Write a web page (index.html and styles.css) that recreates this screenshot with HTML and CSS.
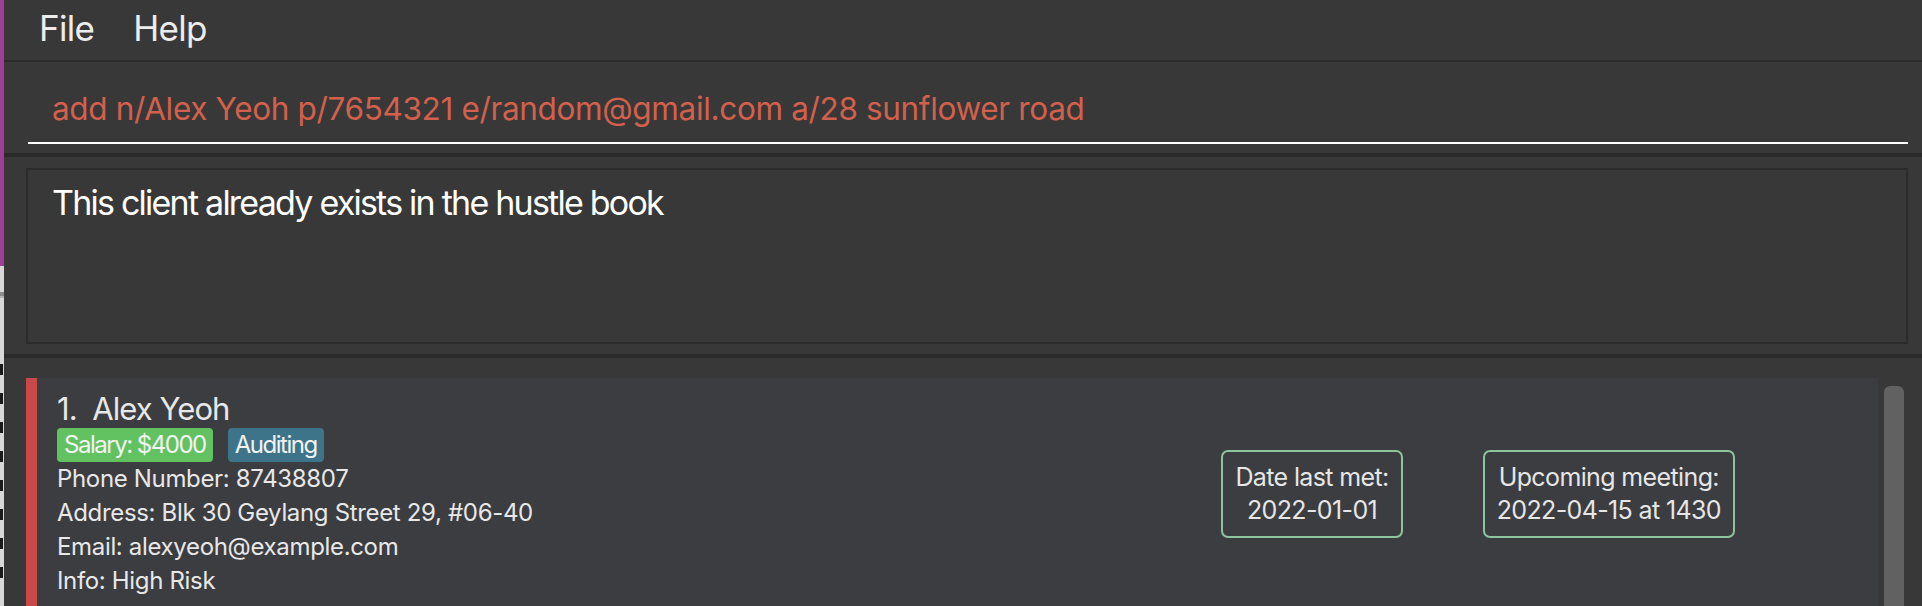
FILE: index.html
```html
<!DOCTYPE html>
<html lang="en">
<head>
<meta charset="utf-8">
<title>Hustle Book</title>
<link rel="stylesheet" href="styles.css">
</head>
<body>
<div class="screen">
  <div class="edge">
    <div class="edge-top"></div>
    <div class="edge-bottom">
      <div class="edge-band"></div>
      <div class="edge-marks">
        <span class="mark"></span><span class="mark"></span><span class="mark"></span>
        <span class="mark"></span><span class="mark"></span><span class="mark"></span>
        <span class="mark"></span><span class="mark"></span>
      </div>
    </div>
  </div>
  <div class="app">
    <nav class="menubar">
      <span class="menu-item">File</span>
      <span class="menu-item">Help</span>
    </nav>
    <section class="command">
      <div class="command-input">add n/Alex Yeoh p/7654321 e/random@gmail.com a/28 sunflower road</div>
    </section>
    <section class="result">
      <div class="result-box">This client already exists in the hustle book</div>
    </section>
    <section class="list">
      <div class="card">
        <div class="card-bar"></div>
        <div class="card-body">
          <div class="info">
            <div class="name">1.&nbsp; Alex Yeoh</div>
            <div class="tags">
              <span class="tag tag-salary">Salary: $4000</span>
              <span class="tag tag-field">Auditing</span>
            </div>
            <div class="line">Phone Number: 87438807</div>
            <div class="line">Address: Blk 30 Geylang Street 29, #06-40</div>
            <div class="line">Email: alexyeoh@example.com</div>
            <div class="line">Info: High Risk</div>
          </div>
          <div class="meetings">
            <div class="meet-box">Date last met:<br>2022-01-01</div>
            <div class="meet-box">Upcoming meeting:<br>2022-04-15 at 1430</div>
          </div>
        </div>
      </div>
      <div class="scrollbar"><div class="thumb"></div></div>
    </section>
  </div>
</div>
</body>
</html>
```

FILE: styles.css
```css
* { box-sizing: border-box; }

html, body {
  margin: 0;
  padding: 0;
}

body {
  width: 1922px;
  height: 606px;
  overflow: hidden;
  background: #383838;
  font-family: Inter, Roboto, "Liberation Sans", sans-serif;
}

.screen {
  display: flex;
  height: 606px;
}

/* sliver of the window behind */
.edge {
  width: 4px;
  display: flex;
  flex-direction: column;
  overflow: hidden;
}

.edge-top {
  height: 266px;
  background: #9d3f98;
}

.edge-bottom {
  flex: 1;
  background: #d8d8d8;
  padding-top: 26px;
}

.edge-band {
  height: 6px;
  background: #8a8a8a;
  margin-bottom: 8px;
  border-bottom: 2px solid #b5b5b5;
}

.edge-marks {
  display: flex;
  flex-direction: column;
  gap: 18px;
  padding-top: 58px;
}

.mark {
  display: block;
  width: 3px;
  height: 11px;
  background: #1a1a1a;
}

.app {
  flex: 1;
  display: flex;
  flex-direction: column;
  background: #383838;
}

/* menu */
.menubar {
  height: 62px;
  display: flex;
  gap: 39px;
  padding: 0 0 6px 35px;
  border-bottom: 2px solid #2b2b2b;
}

.menu-item {
  font-size: 35px;
  line-height: 56px;
  letter-spacing: -0.02em;
  color: #ececec;
}

/* command */
.command {
  padding: 27px 14px 9px 24px;
  border-bottom: 4px solid #2a2a2a;
}

.command-input {
  font-size: 31.5px;
  line-height: 40px;
  letter-spacing: -0.011em;
  color: #d3604c;
  padding: 0 0 13px 24px;
  border-bottom: 2px solid #ffffff;
  white-space: nowrap;
}

/* result */
.result {
  padding: 11px 14px 10px 22px;
  border-bottom: 4px solid #2a2a2a;
}

.result-box {
  height: 176px;
  border: 2px solid #2b2b2b;
  padding: 13px 24px;
  font-size: 34px;
  line-height: 40px;
  letter-spacing: -0.052em;
  color: #ffffff;
}

/* list */
.list {
  flex: 1;
  display: flex;
  padding: 20px 0 0 22px;
  overflow: hidden;
}

.card {
  flex: 1;
  display: flex;
  background: #3c3d40;
  min-height: 240px;
}

.card-bar {
  width: 11px;
  background: #c9494b;
}

.card-body {
  flex: 1;
  display: flex;
  align-items: center;
  padding: 12px 143px 12px 20px;
}

.info {
  flex: 1;
  align-self: flex-start;
  color: #e8e8e8;
}

.name {
  font-size: 31px;
  line-height: 38px;
  letter-spacing: -0.03em;
}

.tags {
  display: flex;
  gap: 15px;
}

.tag {
  font-size: 24px;
  line-height: 34px;
  letter-spacing: -0.062em;
  padding: 0 7px;
  border-radius: 4px;
  color: #f2f2f2;
}

.tag-salary { background: #62c262; }
.tag-field { background: #3d7489; }

.line {
  font-size: 24px;
  line-height: 34px;
  letter-spacing: -0.014em;
}

.meetings {
  display: flex;
  gap: 80px;
  margin-top: -8px;
}

.meet-box {
  border: 2px solid #8cc59e;
  border-radius: 7px;
  padding: 9px 12px 9px;
  font-size: 25px;
  line-height: 33px;
  letter-spacing: -0.025em;
  text-align: center;
  color: #e6e6e6;
}

.scrollbar {
  width: 44px;
  padding: 8px 18px 0 6px;
}

.thumb {
  height: 100%;
  background: #616161;
  border-radius: 6px 6px 0 0;
}
```
